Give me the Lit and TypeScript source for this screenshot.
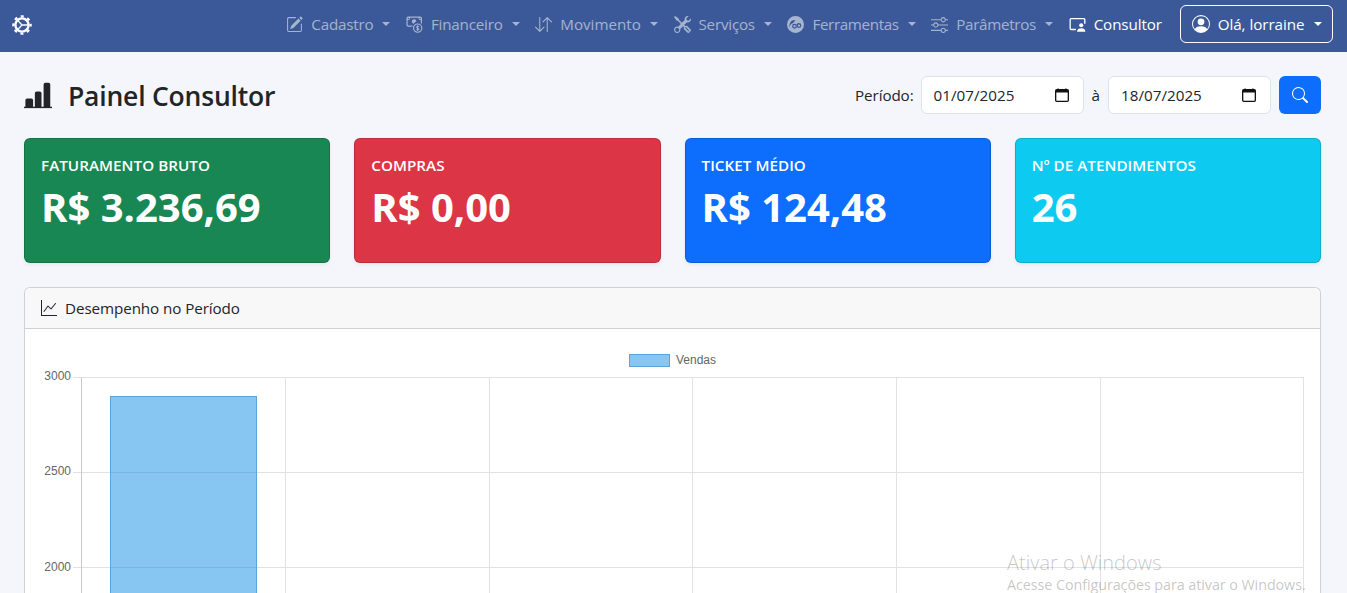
import { LitElement, html, css, svg } from "lit";
import { customElement } from "lit/decorators.js";

const icon = (body: unknown, cls = "") => html`<svg class="ic ${cls}" viewBox="0 0 16 16" fill="currentColor">${body}</svg>`;

const I = {
  gear: svg`<circle cx="8" cy="8" r="5.3" fill="none" stroke="currentColor" stroke-width="1.900"/><circle cx="8" cy="8" r="6.900" fill="none" stroke="currentColor" stroke-width="1.800" stroke-dasharray="2.400 3.020" stroke-dashoffset="1.200"/><path d="M4.700 4.500 8 8l-3.300 3.500M8 8h4.800" fill="none" stroke="currentColor" stroke-width="1.100"/>`,
  edit: svg`<path d="M15.502 1.94a.5.5 0 0 1 0 .706L14.459 3.69l-2-2L13.502.646a.5.5 0 0 1 .707 0l1.293 1.293zm-1.75 2.456-2-2L4.939 9.21a.5.5 0 0 0-.121.196l-.805 2.414a.25.25 0 0 0 .316.316l2.414-.805a.5.5 0 0 0 .196-.12l6.813-6.814z"/><path fill-rule="evenodd" d="M1 13.5A1.5 1.5 0 0 0 2.5 15h11a1.5 1.5 0 0 0 1.5-1.5v-6a.5.5 0 0 0-1 0v6a.5.5 0 0 1-.5.5h-11a.5.5 0 0 1-.5-.5v-11a.5.5 0 0 1 .5-.5H9a.5.5 0 0 0 0-1H2.5A1.5 1.5 0 0 0 1 2.5z"/>`,
  cash: svg`<path d="M6 9.500H2a1 1 0 0 1-1-1V2a1 1 0 0 1 1-1h11.500a1 1 0 0 1 1 1v5" fill="none" stroke="currentColor" stroke-width="1.100"/><path d="M1 3.200h2.200V1M12.300 1v2.200h2.200" fill="none" stroke="currentColor" stroke-width=".8"/><path d="M5.500 5.500a2.200 2.200 0 0 1 4.300-.8L7.200 7.400a2.200 2.200 0 0 1-1.700-1.900z"/><circle cx="11" cy="11.400" r="3.900" fill="none" stroke="currentColor" stroke-width="1.100"/><path d="M12.300 10.200c-.3-.8-2.500-.8-2.600.3 0 1.300 2.700.6 2.700 1.900 0 1-2.400 1-2.800.2M11 8.900v5" fill="none" stroke="currentColor" stroke-width=".8"/>`,
  arrows: svg`<path fill-rule="evenodd" d="M11.5 15a.5.5 0 0 0 .5-.5V2.707l3.146 3.147a.5.5 0 0 0 .708-.708l-4-4a.5.5 0 0 0-.708 0l-4 4a.5.5 0 1 0 .708.708L11 2.707V14.5a.5.5 0 0 0 .5.5m-7-14a.5.5 0 0 1 .5.5v11.793l3.146-3.147a.5.5 0 0 1 .708.708l-4 4a.5.5 0 0 1-.708 0l-4-4a.5.5 0 0 1 .708-.708L4 13.293V1.5a.5.5 0 0 1 .5-.5"/>`,
  tools: svg`<path d="M1 0 0 1l2.2 3.081a1 1 0 0 0 .815.419h.07a1 1 0 0 1 .708.293l2.675 2.675-2.617 2.654A3.003 3.003 0 0 0 0 13a3 3 0 1 0 5.878-.851l2.654-2.617.968.968-.305.914a1 1 0 0 0 .242 1.023l3.27 3.27a.997.997 0 0 0 1.414 0l1.586-1.586a.997.997 0 0 0 0-1.414l-3.27-3.27a1 1 0 0 0-1.023-.242L10.5 9.5l-.96-.96 2.68-2.643A3.005 3.005 0 0 0 16 3q0-.405-.102-.777l-2.14 2.141L12 4l-.364-1.757L13.777.102a3 3 0 0 0-3.675 3.68L7.462 6.46 4.793 3.793a1 1 0 0 1-.293-.707v-.071a1 1 0 0 0-.419-.814zm9.646 10.646a.5.5 0 0 1 .708 0l2.914 2.915a.5.5 0 0 1-.707.707l-2.915-2.914a.5.5 0 0 1 0-.708M3 11l.471.242.529.026.287.445.445.287.026.529L5 13l-.242.471-.026.529-.445.287-.287.445-.529.026L3 15l-.471-.242L2 14.732l-.287-.445L1.268 14l-.026-.529L1 13l.242-.471.026-.529.445-.287.287-.445.529-.026z"/>`,
  globe: svg`<path fill-rule="evenodd" d="M8 0a8 8 0 1 1 0 16A8 8 0 0 1 8 0M2.600 11.400c-.4-2.400 1-4.400 3.200-4.900.4-1 1.200-1.700 2.200-2.100-.7-.4-1.400-.5-2.200-.4C3.500 4.400 1.600 7.800 2.600 11.400m4.500-4.100a2.300 2.300 0 1 0 0 4.600 2.300 2.300 0 0 0 0-4.600m0 1.200a1.100 1.100 0 1 1 0 2.200 1.100 1.100 0 0 1 0-2.200m4.100-1.800a2.300 2.300 0 1 0 0 4.600 2.300 2.300 0 0 0 0-4.600m0 1.200a1.100 1.100 0 1 1 0 2.200 1.100 1.100 0 0 1 0-2.200"/>`,
  sliders: svg`<path fill-rule="evenodd" d="M11.500 2a1.500 1.500 0 1 0 0 3 1.500 1.500 0 0 0 0-3M9.050 3a2.500 2.500 0 0 1 4.900 0H16v1h-2.050a2.500 2.500 0 0 1-4.900 0H0V3zM4.500 7a1.500 1.500 0 1 0 0 3 1.500 1.500 0 0 0 0-3M2.050 8a2.500 2.500 0 0 1 4.900 0H16v1H6.950a2.500 2.500 0 0 1-4.900 0H0V8zm9.450 4a1.500 1.500 0 1 0 0 3 1.500 1.500 0 0 0 0-3m-2.450 1a2.500 2.500 0 0 1 4.900 0H16v1h-2.050a2.500 2.500 0 0 1-4.900 0H0v-1z"/>`,
  screen: svg`<path d="M2 1.800h12a1.500 1.500 0 0 1 1.500 1.500v4h-1.300V3.300a.3.300 0 0 0-.2-.2H2a.3.300 0 0 0-.3.200v8.400a.3.300 0 0 0 .3.300h4.500v1.300H2A1.500 1.500 0 0 1 .5 11.800V3.300A1.500 1.500 0 0 1 2 1.800"/><circle cx="11.500" cy="8.800" r="1.900"/><path d="M7.600 14.800c0-2.300 1.700-3.300 3.900-3.300s3.900 1 3.900 3.300z"/>`,
  person: svg`<path d="M11 6a3 3 0 1 1-6 0 3 3 0 0 1 6 0"/><path fill-rule="evenodd" d="M0 8a8 8 0 1 1 16 0A8 8 0 0 1 0 8m8-7a7 7 0 0 0-5.468 11.370C3.242 11.226 4.805 10 8 10s4.757 1.225 5.468 2.370A7 7 0 0 0 8 1"/>`,
  bars: svg`<path d="M.8 11a1 1 0 0 1 1-1h2.400a1 1 0 0 1 1 1v4H.8zm5.400-4a1 1 0 0 1 1-1h1.800a1 1 0 0 1 1 1v8H6.200zm5-5a1 1 0 0 1 1-1h1.800a1 1 0 0 1 1 1v13h-3.800z"/><path d="M0 14.700h16v.8H0z"/>`,
  search: svg`<path d="M11.742 10.344a6.500 6.500 0 1 0-1.397 1.398h-.001q.044.060.098.115l3.850 3.850a1 1 0 0 0 1.415-1.414l-3.850-3.850a1 1 0 0 0-.115-.100zM12 6.500a5.500 5.500 0 1 1-11 0 5.500 5.500 0 0 1 11 0"/>`,
  line: svg`<path fill-rule="evenodd" d="M0 0h1v15h15v1H0zm14.817 3.113a.5.500 0 0 1 .07.704l-4.500 5.500a.5.500 0 0 1-.74.037L7.060 6.767l-3.656 5.027a.5.500 0 0 1-.808-.588l4-5.500a.5.500 0 0 1 .758-.060l2.609 2.610 4.150-5.073a.5.500 0 0 1 .704-.070"/>`,
  cal: svg`<path d="M3.500 0a.5.500 0 0 1 .5.500V1h8V.500a.5.500 0 0 1 1 0V1h1a2 2 0 0 1 2 2v11a2 2 0 0 1-2 2H2a2 2 0 0 1-2-2V3a2 2 0 0 1 2-2h1V.500a.5.500 0 0 1 .5-.500M1.500 5v9a.5.500 0 0 0 .5.500h12a.5.500 0 0 0 .5-.500V5z"/>`,
};

const navItems: [unknown, string, number][] = [
  [I.edit, "Cadastro", -0.22],
  [I.cash, "Financeiro", -0.2],
  [I.arrows, "Movimento", 0],
  [I.tools, "Serviços", -0.22],
  [I.globe, "Ferramentas", -0.37],
  [I.sliders, "Parâmetros", -0.3],
];

const cards = [
  ["green", "FATURAMENTO BRUTO", "R$ 3.236,69"],
  ["red", "COMPRAS", "R$ 0,00"],
  ["blue", "TICKET MÉDIO", "R$ 124,48"],
  ["cyan", "Nº DE ATENDIMENTOS", "26"],
];

@customElement("app-root")
export class AppRoot extends LitElement {
  static styles = css`
    :host {
      display: block;
      height: 593px;
      overflow: hidden;
      background: #f4f6fb;
      color: #212529;
      font-family: "Open Sans", "Noto Sans", sans-serif;
      font-size: 15.2px;
      position: relative;
    }
    .ic { width: 16px; height: 16px; display: block; flex: none; }
    nav {
      height: 52px;
      box-sizing: border-box;
      background: #3b5998;
      display: flex;
      align-items: center;
      padding: 0 14px 4px 12px;
    }
    .brand { color: #fff; margin-right: auto; margin-top: 2px; }
    .brand .ic { width: 20px; height: 20px; }
    .item {
      display: flex;
      align-items: center;
      gap: 8px;
      padding: 0 7.800px;
      color: rgba(255, 255, 255, 0.55);
      white-space: nowrap;
    }
    .item .ic { width: 17px; height: 17px; }
    .item.on { color: #fff; margin-right: 10px; letter-spacing: -0.1px; }
    .caret {
      width: 0; height: 0;
      margin-left: 1px;
      border-top: 4.500px solid currentColor;
      border-left: 4.500px solid transparent;
      border-right: 4.500px solid transparent;
    }
    .user {
      display: flex;
      align-items: center;
      gap: 8px;
      height: 38px;
      box-sizing: border-box;
      padding: 0 10.500px 0 11px;
      color: #fff;
      border: 1px solid #fff;
      border-radius: 6px;
      white-space: nowrap;
      letter-spacing: -0.05px;
    }
    .user .ic { width: 18px; height: 18px; }
    main { padding: 24px 26px 0 24px; }
    .head { display: flex; align-items: center; height: 38px; }
    h1 {
      display: flex; align-items: center; gap: 16px;
      margin: 2px auto 0 0;
      font-size: 26.500px;
      font-weight: 600;
      letter-spacing: -0.2px;
    }
    h1 .ic { width: 28px; height: 28px; margin-top: -2px; }
    .period { display: flex; align-items: center; }
    .period label { margin-right: 7px; letter-spacing: -0.1px; }
    .amp { margin: 0 8px; }
    .date {
      display: flex; align-items: center; justify-content: space-between;
      box-sizing: border-box;
      height: 38px;
      padding: 0 14px 0 12px;
      background: #fff;
      border: 1px solid #dee2e6;
      border-radius: 6px;
      letter-spacing: 0.02px;
    }
    .date.a { width: 163px; }
    .date.b { width: 163px; }
    .date .ic { width: 14px; height: 14px; color: #111; }
    .go {
      display: flex; align-items: center; justify-content: center;
      width: 42px; height: 38px;
      margin-left: 8px;
      background: #0d6efd;
      color: #fff;
      border-radius: 6px;
    }
    .cards {
      display: grid;
      grid-template-columns: repeat(4, 1fr);
      gap: 24px;
      margin-top: 24px;
    }
    .card {
      height: 125px;
      box-sizing: border-box;
      padding: 16px;
      color: #fff;
      border: 1px solid rgba(0, 0, 0, 0.15);
      border-radius: 6px;
      box-shadow: 0 2px 4px rgba(0, 0, 0, 0.06);
    }
    .card .t { font-size: 15.200px; font-weight: 600; line-height: 21px; letter-spacing: 0.05px; }
    .card .v { font-size: 40px; font-weight: 700; line-height: 46px; margin-top: 8px; }
    .green { background: #198754; }
    .red { background: #dc3545; }
    .blue { background: #0d6efd; }
    .cyan { background: #0dcaf0; }
    .panel {
      margin-top: 24px;
      background: #fff;
      border: 1px solid #ced1d6;
      border-bottom: none;
      border-radius: 6px 6px 0 0;
      height: 400px;
    }
    .panel header {
      display: flex; align-items: center; gap: 8px;
      height: 40px;
      padding: 0 16px;
      background: #f8f8f8;
      border-bottom: 1px solid #ced1d6;
      border-radius: 6px 6px 0 0;
      letter-spacing: -0.08px;
    }
    .chart { display: block; }
    .wm {
      position: absolute;
      left: 1007px;
      top: 551px;
      color: rgba(60, 60, 60, 0.3);
      white-space: nowrap;
      pointer-events: none;
    }
    .wm .a { font-size: 20px; line-height: 24px; font-weight: 300; }
    .wm .b { font-size: 14.300px; line-height: 20px; letter-spacing: -0.05px; }
  `;

  render() {
    const xs = [56, 260, 464, 667, 871, 1075, 1278];
    const ys = [48, 143, 238];
    const labelDy = [3, 3, 4];
    return html`
      <nav>
        <span class="brand">${icon(I.gear)}</span>
        ${navItems.map(([g, t, ls]) => html`<span class="item">${icon(g)}<span style="letter-spacing:${ls}px">${t}</span><span class="caret"></span></span>`)}
        <span class="item on">${icon(I.screen)}<span>Consultor</span></span>
        <span class="user">${icon(I.person)}<span>Olá, lorraine</span><span class="caret"></span></span>
      </nav>
      <main>
        <div class="head">
          <h1>${icon(I.bars)}<span>Painel Consultor</span></h1>
          <div class="period">
            <label>Período:</label>
            <span class="date a"><span>01/07/2025</span>${icon(I.cal)}</span>
            <span class="amp">à</span>
            <span class="date b"><span>18/07/2025</span>${icon(I.cal)}</span>
            <span class="go">${icon(I.search)}</span>
          </div>
        </div>
        <div class="cards">
          ${cards.map(([c, t, v]) => html`<div class="card ${c}"><div class="t">${t}</div><div class="v">${v}</div></div>`)}
        </div>
        <section class="panel">
          <header>${icon(I.line)}<span>Desempenho no Período</span></header>
          <svg class="chart" width="1295" height="265" font-family="Liberation Sans, sans-serif" font-size="12" fill="#666">
            <rect x="604.500" y="25.500" width="40" height="12" fill="#87c5f2" stroke="#5ba3d9"></rect>
            <text x="651" y="34.500">Vendas</text>
            ${ys.map((y, i) => svg`
              <line x1="48" x2="1278" y1=${y + 0.5} y2=${y + 0.5} stroke="#e2e2e2"></line>
              <text x="46" y=${y + labelDy[i]} text-anchor="end">${3000 - i * 500}</text>
            `)}
            ${xs.map((x, i) => svg`<line x1=${x + 0.5} x2=${x + 0.5} y1="48" y2="265" stroke=${i === 0 ? "#c8c8c8" : "#e2e2e2"}></line>`)}
            <rect x="85.500" y="67.500" width="146" height="200" fill="#87c5f2" stroke="#5ba3d9"></rect>
            <line x1="85" x2="232" y1="143.500" y2="143.500" stroke="#6fa8d0" stroke-opacity=".5"></line>
            <line x1="85" x2="232" y1="238.500" y2="238.500" stroke="#6fa8d0" stroke-opacity=".5"></line>
          </svg>
        </section>
      </main>
      <div class="wm"><div class="a">Ativar o Windows</div><div class="b">Acesse Configurações para ativar o Windows.</div></div>
    `;
  }
}
